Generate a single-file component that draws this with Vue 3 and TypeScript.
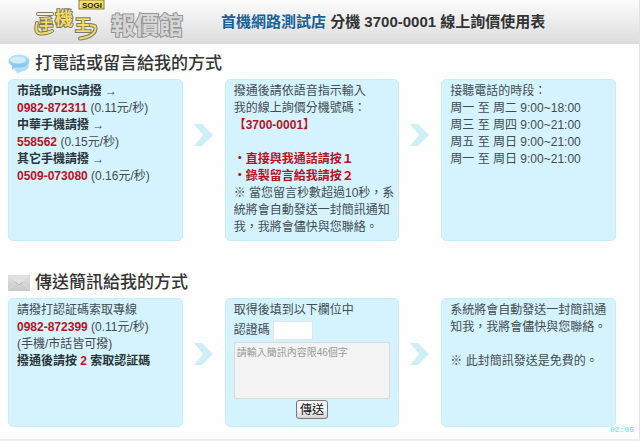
<script setup lang="ts">
import { ref } from 'vue'

interface Dial {
  label: string
  phone: string
  rate: string
}

const dials: Dial[] = [
  { label: '市話或PHS請撥', phone: '0982-872311', rate: '(0.11元/秒)' },
  { label: '中華手機請撥', phone: '558562', rate: '(0.15元/秒)' },
  { label: '其它手機請撥', phone: '0509-073080', rate: '(0.16元/秒)' },
]

const hours: string[] = [
  '周一 至 周二 9:00~18:00',
  '周三 至 周四 9:00~21:00',
  '周五 至 周日 9:00~21:00',
  '周一 至 周日 9:00~21:00',
]

const code = ref('')
const message = ref('')
</script>

<template>
  <div class="page">
    <header class="top">
      <svg class="logo" viewBox="0 0 160 44" role="img" aria-label="SOGI 手機王 報價館">
        <g fill="none" stroke-linecap="round" stroke-linejoin="round">
          <g stroke="#7d7a68" stroke-width="4">
            <path d="M8 14H22" />
            <path d="M7 23C6 27 5 33 10 33.500C15 34 18 33 22 31" />
            <path d="M60 25L65 26C68 33 58 38 50 38.500" />
          </g>
          <g stroke="#f2dc62" stroke-width="2">
            <path d="M8 14H22" stroke="#f4f0dc" />
            <path d="M7 23C6 27 5 33 10 33.500C15 34 18 33 22 31" />
            <path d="M60 25L65 26C68 33 58 38 50 38.500" />
          </g>
        </g>
        <g class="brand">
          <text x="9" y="29" font-size="14">手</text>
          <text x="25" y="25" font-size="18">機</text>
          <text x="45" y="31" font-size="16">王</text>
        </g>
        <rect x="49" y="0" width="25" height="9" fill="#f3dc78" stroke="#8d7b35" />
        <text class="sogi" x="52" y="8">SOGI</text>
        <text class="quote" x="81" y="34">報價館</text>
      </svg>
      <h1><a href="#">首機網路測試店</a> 分機 3700-0001 線上詢價使用表</h1>
    </header>

    <main>
      <section>
        <h2>
          <svg class="icon" viewBox="0 0 22 20" aria-hidden="true">
            <defs>
              <linearGradient id="bubble" x1="0" y1="0" x2="0" y2="1">
                <stop offset="0" stop-color="#b9e2f7" />
                <stop offset="1" stop-color="#7cc4ee" />
              </linearGradient>
            </defs>
            <path d="M8 12C13 11 18 9 20 8C22 12 20 16 16 17C13 18 11 18 9 20C9 18 8 17 6 16Z" fill="#b5def5" />
            <ellipse cx="11" cy="7" rx="10.500" ry="6.500" fill="url(#bubble)" />
            <path d="M4 11L4 16L10 12Z" fill="#8fcbed" />
            <ellipse cx="10" cy="6" rx="8" ry="3.500" fill="#d3edfa" />
          </svg>
          打電話或留言給我的方式
        </h2>
        <div class="steps">
          <div class="card tall">
            <template v-for="d in dials" :key="d.phone">
              <p><b>{{ d.label }}</b> →</p>
              <p><b class="red">{{ d.phone }}</b> {{ d.rate }}</p>
            </template>
          </div>
          <svg class="arrow" viewBox="0 0 20 22" aria-hidden="true"><path d="M0 0H8L19 11L8 22H0L9 11Z" /></svg>
          <div class="card tall">
            <p>撥通後請依語音指示輸入</p>
            <p>我的線上詢價分機號碼：</p>
            <p><b class="red">【3700-0001】</b></p>
            <p class="gap"><b class="red">・直接與我通話請按１</b></p>
            <p><b class="red">・錄製留言給我請按２</b></p>
            <p>※ 當您留言秒數超過10秒，系<br />統將會自動發送一封簡訊通知<br />我，我將會儘快與您聯絡。</p>
          </div>
          <svg class="arrow" viewBox="0 0 20 22" aria-hidden="true"><path d="M0 0H8L19 11L8 22H0L9 11Z" /></svg>
          <div class="card tall">
            <p>接聽電話的時段：</p>
            <p v-for="h in hours" :key="h">{{ h }}</p>
          </div>
        </div>
      </section>

      <section>
        <h2>
          <svg class="icon" viewBox="0 0 22 20" aria-hidden="true">
            <defs>
              <linearGradient id="mail" x1="0" y1="0" x2="0" y2="1">
                <stop offset="0" stop-color="#e0e0e0" />
                <stop offset="1" stop-color="#c9c9c9" />
              </linearGradient>
            </defs>
            <rect x="0" y="2" width="22" height="16" fill="url(#mail)" />
            <path d="M0 17L8 10M22 17L14 10" stroke="#dcdcdc" fill="none" />
            <path d="M1 3L11 12L21 3" fill="#e2e2e2" />
            <path d="M7 9L11 12L15 9" stroke="#b4b4b4" fill="none" />
          </svg>
          傳送簡訊給我的方式
        </h2>
        <div class="steps">
          <div class="card">
            <p>請撥打認証碼索取專線</p>
            <p><b class="red">0982-872399</b> (0.11元/秒)</p>
            <p>(手機/市話皆可撥)</p>
            <p><b>撥通後請按 <span class="red">2</span> 索取認証碼</b></p>
          </div>
          <svg class="arrow" viewBox="0 0 20 22" aria-hidden="true"><path d="M0 0H8L19 11L8 22H0L9 11Z" /></svg>
          <form class="card" @submit.prevent>
            <p>取得後填到以下欄位中</p>
            <div class="field">
              <label for="code">認證碼</label>
              <input id="code" v-model="code" type="text" />
            </div>
            <textarea v-model="message" aria-label="簡訊內容" placeholder="請輸入簡訊內容限46個字"></textarea>
            <button type="submit">傳送</button>
          </form>
          <svg class="arrow" viewBox="0 0 20 22" aria-hidden="true"><path d="M0 0H8L19 11L8 22H0L9 11Z" /></svg>
          <div class="card">
            <p>系統將會自動發送一封簡訊通<br />知我，我將會儘快與您聯絡。</p>
            <p class="gap">※ 此封簡訊發送是免費的。</p>
          </div>
        </div>
      </section>
    </main>
    <time class="clock">02:05</time>
  </div>
</template>

<style>
body {
  margin: 0;
  background: #fefefe;
}
</style>

<style scoped>
.page {
  position: relative;
  border-right: 1px solid #e2e2e2;
  border-bottom: 2px solid #ececec;
  background: #fefefe;
  color: #444b50;
  font: 12px/17px "Liberation Sans", "Noto Sans CJK TC", sans-serif;
}
.top {
  display: flex;
  align-items: center;
  height: 44px;
  padding-left: 30px;
  background: linear-gradient(#fcfcfc, #dcdcdc);
}
.logo {
  width: 160px;
  height: 44px;
  flex: none;
}
.logo text {
  font-family: "Liberation Sans", "Noto Sans CJK TC", sans-serif;
  font-weight: bold;
}
.brand text {
  fill: #f2dc62;
  stroke: #7d7a68;
  stroke-width: 2px;
  paint-order: stroke;
}
.logo .sogi {
  font-size: 8px;
  fill: #222;
}
.logo .quote {
  font-size: 24px;
  fill: #d6d6d6;
  stroke: #959595;
  stroke-width: 2px;
  paint-order: stroke;
}
h1,
h2,
p {
  margin: 0;
}
h1 {
  padding-left: 31px;
  color: #333;
  font-size: 15px;
  line-height: 20px;
  white-space: nowrap;
}
h1 a {
  color: #17619a;
  text-decoration: none;
}
main {
  padding: 0 23px 12px 8px;
}
section + section {
  padding-top: 22px;
}
h2 {
  display: flex;
  align-items: center;
  gap: 5px;
  box-sizing: border-box;
  height: 35px;
  padding-top: 4px;
  color: #333;
  font-size: 17px;
  font-weight: 500;
}
.icon {
  width: 22px;
  height: 20px;
}
.steps {
  display: flex;
}
.card {
  box-sizing: border-box;
  flex: 1;
  min-width: 0;
  min-height: 129px;
  padding: 3px 8px 2px;
  border: 1px solid #c6eef8;
  border-radius: 5px;
  background: #d4f3fe;
  white-space: nowrap;
}
.tall {
  min-height: 162px;
}
.gap {
  padding-top: 17px;
}
.arrow {
  width: 20px;
  height: 22px;
  flex: none;
  margin: 45px 11px 0;
  fill: #cdeff8;
}
b {
  color: #2b3338;
}
.red {
  color: #b8121e;
}
form.card {
  display: flex;
  flex-direction: column;
}
.field {
  display: flex;
  align-items: center;
  gap: 3px;
  padding: 2px 0;
}
input {
  box-sizing: border-box;
  width: 40px;
  height: 19px;
  padding: 0 2px;
  border: 1px solid #dde6e8;
  background: #fff;
  font: inherit;
}
textarea {
  box-sizing: border-box;
  height: 57px;
  padding: 3px 2px;
  border: 1px solid #d5dbdd;
  background: #f3f3f3;
  font: 10px/14px "Liberation Sans", "Noto Sans CJK TC", sans-serif;
  resize: none;
}
textarea::placeholder {
  color: #999;
}
button {
  align-self: center;
  height: 19px;
  margin-top: 1px;
  padding: 0 3px;
  border: 1px solid #777;
  border-radius: 3px;
  background: linear-gradient(#f4f4f4 50%, #d5d5d5);
  color: #111;
  font: 12px/16px "Liberation Sans", "Noto Sans CJK TC", sans-serif;
}
.clock {
  position: absolute;
  right: 5px;
  bottom: 2px;
  color: #7beaf0;
  font: bold 8px/14px "Liberation Mono", monospace;
}
</style>
